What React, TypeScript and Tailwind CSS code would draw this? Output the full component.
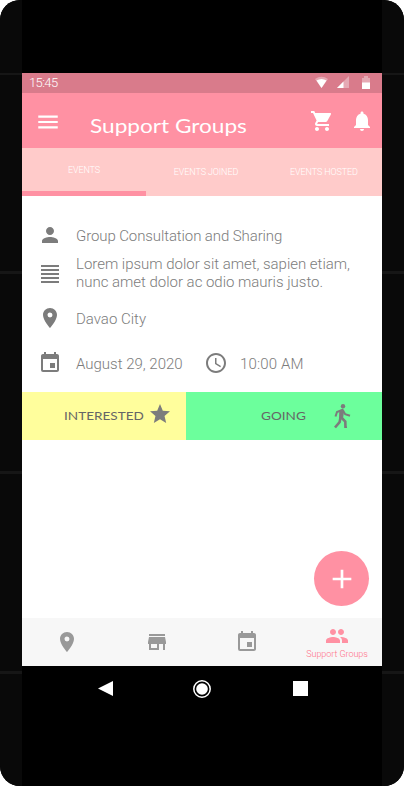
import type { ReactNode } from "react";
import {
  MdAccessTime, MdAdd, MdEvent, MdFormatAlignJustify, MdMenu,
  MdNotifications, MdPeople, MdPerson, MdPlace, MdShoppingCart, MdStar, MdStore,
} from "react-icons/md";

function Rail() {
  return (
    <div className="flex w-[22px] flex-col bg-[#090909] pt-[73px]">
      <div className="h-0.5 bg-[#161616]" />
      <div className="mt-[196px] h-[3px] bg-[#161616]" />
      <div className="mt-[197px] h-[3px] bg-[#161616]" />
      <div className="mt-[197px] h-[3px] bg-[#161616]" />
    </div>
  );
}

function StatusBar() {
  return (
    <div className="flex h-5 justify-between bg-[#d97b8b] pl-[7px] pr-3 text-white">
      <span className="text-[13px] leading-[20px] tracking-[-0.6px]">15:45</span>
      <div className="flex pt-[3px]">
        <svg className="mr-[9px] h-3 w-[13px]" viewBox="0 0 13 12">
          <path d="M0 3Q6.5-1.5 13 3L6.5 12Z" fill="#e6a9b4" />
          <path d="M1.5 4.5Q6.5 1.5 11.5 4.5L6.5 12Z" fill="white" />
        </svg>
        <svg className="mr-[13px] h-3 w-3" viewBox="0 0 12 12">
          <path d="M12 0V12H0Z" fill="#e6a9b4" />
          <path d="M6.5 5.5V12H0Z" fill="white" />
        </svg>
        <svg className="h-[13px] w-2" viewBox="0 0 8 13">
          <path d="M0 2H2V0H6V2H8V13H0Z" fill="#e6a9b4" />
          <path d="M0 6.5H8V13H0Z" fill="white" />
        </svg>
      </div>
    </div>
  );
}

function Header() {
  return (
    <header className="flex h-[55px] items-start bg-[#ff91a3] pl-[13px] text-white">
      <MdMenu className="mt-[15.5px] size-[26px]" />
      <h1 className="ml-[29px] mt-[18px] w-[220px] text-white">
        <span className="inline-block origin-left scale-x-[1.13] font-['Lato'] text-[20px] font-normal leading-7">Support Groups</span>
      </h1>
      <MdShoppingCart className="mt-4 size-6" />
      <MdNotifications className="ml-4 mt-4 size-6" />
    </header>
  );
}

function Tabs() {
  return (
    <nav className="flex h-12 bg-[#ffcbca] text-center text-[9px] leading-3 tracking-[-0.1px] text-white">
      <div className="w-[124px] border-b-[5px] border-[#ff91a3] pt-4">EVENTS</div>
      <div className="w-[120px] pt-[18px]">EVENTS JOINED</div>
      <div className="w-[116px] pt-[18px]">EVENTS HOSTED</div>
    </nav>
  );
}

function Row({ icon, className, textClass, children }: { icon: ReactNode; className: string; textClass: string; children: ReactNode }) {
  return (
    <div className={"flex items-center pl-4 " + className}>
      {icon}
      <div className={"ml-3.5 " + textClass}>{children}</div>
    </div>
  );
}

function Details() {
  const icon = "size-6 shrink-0";
  return (
    <section className="h-[196px] pt-[27px] text-[15px] leading-[18px] text-[#7c7c7c]">
      <Row icon={<MdPerson className={icon} />} className="h-6" textClass="pt-0.5 tracking-[-0.1px]">Group Consultation and Sharing</Row>
      <Row icon={<MdFormatAlignJustify className={icon} />} className="mt-2 h-[38px]" textClass="pb-0.5 tracking-[-0.02px]">
        Lorem ipsum dolor sit amet, sapien etiam,<br />nunc amet dolor ac odio mauris justo.
      </Row>
      <Row icon={<MdPlace className={icon} />} className="mt-[13px] h-6" textClass="pt-0.5">Davao City</Row>
      <div className="mt-[21px] flex">
        <Row icon={<MdEvent className={icon} />} className="h-6 w-[166px]" textClass="pt-0.5">August 29, 2020</Row>
        <Row icon={<MdAccessTime className={icon} />} className="h-6" textClass="pt-0.5 tracking-[0.15px]">
          <span className="-ml-0.5">10:00 AM</span>
        </Row>
      </div>
    </section>
  );
}

function WalkIcon() {
  return (
    <svg className="h-[25px] w-[17px] text-[#7c7c7c]" viewBox="0 0 17 25" fill="none" stroke="currentColor" strokeWidth="2">
      <circle cx="9" cy="2.2" r="2.2" fill="currentColor" stroke="none" />
      <path d="M1.5 12.5L3 8L8.5 5.8L11.2 10.2L16 11.7" />
      <path d="M5.3 6.5H10.2L8.9 15H5Z" fill="currentColor" stroke="none" />
      <path d="M6.5 13.5L5.6 18.2L1 23.5" strokeWidth="2.6" />
      <path d="M7.3 13.5L11.3 17.5L11.5 24" strokeWidth="2.6" />
      <path d="M11.5 23.2H13" strokeWidth="1.6" />
    </svg>
  );
}

function Actions() {
  return (
    <div className="flex h-12 font-['Lato'] text-[12px] font-normal text-[#666]">
      <button className="flex w-[164px] items-center bg-[#fffe9c] pl-[42px]">
        <span className="w-[84px] text-left"><span className="inline-block origin-left scale-x-[1.13]">INTERESTED</span></span>
        <MdStar className="-mt-1 size-6 text-[#7c7c7c]" />
      </button>
      <button className="flex w-[196px] items-center bg-[#6cff9c] pl-[75px]">
        <span className="w-[73px] text-left"><span className="inline-block origin-left scale-x-[1.13]">GOING</span></span>
        <WalkIcon />
      </button>
    </div>
  );
}

function BottomNav() {
  return (
    <nav className="grid h-12 grid-cols-4 justify-items-center bg-[#f7f7f7] text-[#999]">
      <MdPlace className="mt-3 size-6" />
      <MdStore className="mt-3 size-6" />
      <MdEvent className="mt-3 size-6" />
      <div className="flex flex-col items-center pt-1.5 text-[#ff91a3]">
        <MdPeople className="size-6" />
        <span className="whitespace-nowrap text-[9px] leading-3 tracking-[-0.05px] text-[#ff7188]">Support Groups</span>
      </div>
    </nav>
  );
}

function SystemNav() {
  return (
    <div className="flex h-[120px] pl-[76px] pt-[14px]">
      <svg className="mt-px h-[15px] w-[15px]" viewBox="0 0 15 15"><path d="M0 7.5L15 0V15Z" fill="white" /></svg>
      <svg className="ml-20 size-[18px]" viewBox="0 0 18 18">
        <circle cx="9" cy="9" r="8.2" fill="none" stroke="white" strokeWidth="1.5" />
        <circle cx="9" cy="9" r="5.8" fill="white" />
      </svg>
      <div className="ml-[82px] mt-px size-[15px] bg-white" />
    </div>
  );
}

export default function App() {
  return (
    <div className="h-[787px] w-[404px] bg-white font-['Roboto',sans-serif] font-light">
      <div className="flex h-[786px] overflow-hidden rounded-[20px] bg-black">
        <Rail />
        <main className="w-[360px] bg-black pt-[73px]">
          <StatusBar />
          <Header />
          <Tabs />
          <div className="flex h-[422px] flex-col bg-white">
            <Details />
            <Actions />
            <button className="mb-3 ml-[292px] mt-auto flex size-[55px] items-center justify-center rounded-full bg-[#ff91a3] text-white">
              <MdAdd className="ml-px mt-px size-8" />
            </button>
          </div>
          <BottomNav />
          <SystemNav />
        </main>
        <Rail />
      </div>
    </div>
  );
}
